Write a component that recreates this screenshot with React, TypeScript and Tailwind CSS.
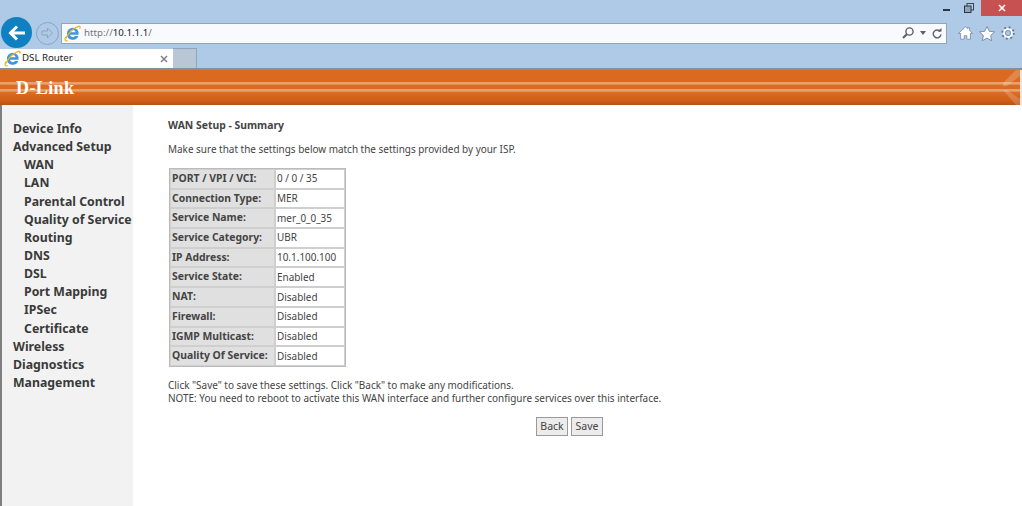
const summary = [
  ["PORT / VPI / VCI:", "0 / 0 / 35"],
  ["Connection Type:", "MER"],
  ["Service Name:", "mer_0_0_35"],
  ["Service Category:", "UBR"],
  ["IP Address:", "10.1.100.100"],
  ["Service State:", "Enabled"],
  ["NAT:", "Disabled"],
  ["Firewall:", "Disabled"],
  ["IGMP Multicast:", "Disabled"],
  ["Quality Of Service:", "Disabled"],
];

const menu = [
  { label: "Device Info", sub: false },
  { label: "Advanced Setup", sub: false },
  { label: "WAN", sub: true },
  { label: "LAN", sub: true },
  { label: "Parental Control", sub: true },
  { label: "Quality of Service", sub: true },
  { label: "Routing", sub: true },
  { label: "DNS", sub: true },
  { label: "DSL", sub: true },
  { label: "Port Mapping", sub: true },
  { label: "IPSec", sub: true },
  { label: "Certificate", sub: true },
  { label: "Wireless", sub: false },
  { label: "Diagnostics", sub: false },
  { label: "Management", sub: false },
];

const IeLogo = ({ size }: { size: number }) => (
  <svg width={size} height={size} viewBox="0 0 16 16" className="shrink-0">
    <path
      fillRule="evenodd"
      fill="#3f97dc"
      d="M8.300 2.500A5.600 5.600 0 0 0 2.700 8.200a5.600 5.600 0 0 0 10.800 2.200h-3a2.800 2.800 0 0 1-4.900-1.200h8.100a5.600 5.600 0 0 0-5.400-6.700zM5.700 6.900a2.700 2.700 0 0 1 5.300 0z"
    />
    <path d="M1.500 13C4 8 9 3 13.500 1.300c1.600-.5 2 .5 1.300 2.200" fill="none" stroke="#f0b429" strokeWidth="1.200" />
    <path d="M1.600 11C.5 14 1 15.500 3.500 14.600" fill="none" stroke="#f0b429" strokeWidth="1.200" />
  </svg>
);

const Chrome = () => (
  <div className="flex h-[68px] flex-col bg-[#afcae7]">
    <div className="flex h-4 items-start justify-end">
      <div className="mt-[9px] h-[2px] w-[7px] bg-[#2c3540]" />
      <svg width="10" height="10" viewBox="0 0 10 10" className="mt-[3px] ml-[14px]">
        <rect x="3" y="0.500" width="6.500" height="6.500" fill="none" stroke="#3a4450" />
        <rect x="0.500" y="3" width="6.500" height="6.500" fill="#8fa3b8" stroke="#2c3540" />
      </svg>
      <div className="ml-[7px] flex h-4 w-[41px] items-center justify-center bg-[#c75050]">
        <svg width="8" height="8" viewBox="0 0 8 8">
          <path d="M1 1l6 6M7 1l-6 6" stroke="#fff" strokeWidth="1.500" />
        </svg>
      </div>
    </div>
    <div className="flex h-[32px] items-center">
      <div className="mt-px ml-px flex h-[31px] w-[31px] shrink-0 items-center justify-center rounded-full bg-[#0f80c2]">
        <svg width="18" height="16" viewBox="0 0 18 16">
          <path d="M9 1.500L2.500 8 9 14.500M3 8h14" fill="none" stroke="#fff" strokeWidth="3" />
        </svg>
      </div>
      <div className="mt-[2px] ml-[4px] flex h-[23px] w-[23px] shrink-0 items-center justify-center rounded-full border border-[#8ca3bd]">
        <svg width="13" height="12" viewBox="0 0 13 12">
          <path d="M6.500 1l5 5-5 5V8H1V4h5.500z" fill="none" stroke="#8ca3bd" />
        </svg>
      </div>
      <div className="mt-[2px] ml-[2px] flex h-[21px] w-[886px] shrink-0 items-center border border-[#8fa5bd] bg-[#f8fafd] pl-[2px] font-['Noto_Sans',sans-serif]">
        <IeLogo size={17} />
        <span className="ml-[3px] text-[9.700px] text-[#777]">
          http://<span className="text-[#222]">10.1.1.1</span>/
        </span>
        <div className="ml-auto flex items-center pr-[4px]">
          <svg width="12" height="12" viewBox="0 0 12 12">
            <circle cx="7.500" cy="4.500" r="3.600" fill="none" stroke="#5b6168" strokeWidth="1.400" />
            <path d="M4.800 7.200L1 11" stroke="#5b6168" strokeWidth="2" />
          </svg>
          <svg width="6" height="4" viewBox="0 0 6 4" className="mx-[6px]">
            <path d="M0 0h6L3 4z" fill="#5b6168" />
          </svg>
          <svg width="10" height="11" viewBox="0 0 10 11">
            <path d="M8.200 3.500A3.900 3.900 0 1 0 9 6.500" fill="none" stroke="#5b6168" strokeWidth="1.400" />
            <path d="M5.500 3.600h4V0z" fill="#5b6168" />
          </svg>
        </div>
      </div>
      <div className="mt-[2px] ml-[11px] flex items-center gap-[6px]">
        <svg width="15" height="14" viewBox="0 0 17 15">
          <path d="M8.500.5L.5 8h2.500v6.500h4v-4h3v4h4V8h2.500L13 4.500V1.500h-2v1z" fill="#fff" stroke="#59708a" strokeWidth=".7" />
        </svg>
        <svg width="16" height="15" viewBox="0 0 16 15">
          <path d="M8 .5l2.200 4.800 5.300.6-3.900 3.600 1 5.200L8 12.100l-4.600 2.600 1-5.200L.5 5.900l5.300-.6z" fill="#fff" stroke="#59708a" strokeWidth=".7" />
        </svg>
        <svg width="14" height="14" viewBox="0 0 15 15">
          <circle cx="7.500" cy="7.500" r="4.500" fill="none" stroke="#f4f7fb" strokeWidth="2.400" />
          <circle cx="7.500" cy="7.500" r="6.200" fill="none" stroke="#66788e" strokeWidth="2" strokeDasharray="2 2.870" />
          <circle cx="7.500" cy="7.500" r="2.700" fill="none" stroke="#66788e" strokeWidth=".7" />
        </svg>
      </div>
    </div>
    <div className="flex h-[20px] items-stretch font-['Noto_Sans',sans-serif]">
      <div className="mt-px flex w-[173px] items-center bg-white pl-[4px]">
        <IeLogo size={17} />
        <span className="ml-px text-[9.700px] text-[#222]">DSL Router</span>
        <svg width="8" height="8" viewBox="0 0 8 8" className="mr-[5px] ml-auto">
          <path d="M1 1l6 6M7 1l-6 6" stroke="#808080" strokeWidth="1.500" />
        </svg>
      </div>
      <div className="w-[24px] border-t border-r border-[#8fa5bd] bg-[#b9c6d6]" />
    </div>
  </div>
);

const Banner = () => (
  <div className="relative flex h-[37px] items-center border-t-2 border-[#7f919f] bg-[linear-gradient(to_bottom,#d96a20_0%,#d96a20_33%,#eba473_36%,#e9a06c_40%,#d96c24_44%,#d96c24_54%,#eba473_56%,#e9a06c_60%,#da6f28_64%,#d8661d_72%,#d06018_85%,#b85312_100%)] pl-4">
    <span className="font-['Liberation_Serif',serif] text-[18px] leading-none font-bold tracking-[0.4px] text-white">D-Link</span>
    <svg width="17" height="35" viewBox="0 0 17 35" className="absolute top-0 right-[2px]">
      <path d="M0 13L13 0h4v6L4 16H0z" fill="#fff" opacity=".2" />
      <path d="M0 20h4L17 29v6h-4z" fill="#fff" opacity=".18" />
    </svg>
    <div className="absolute top-0 right-0 h-[35px] w-[2px] bg-[#f3e3d6]" />
  </div>
);

const App = () => (
  <div className="h-[506px] w-[1022px] overflow-hidden bg-white font-['Noto_Sans',sans-serif]">
    <Chrome />
    <Banner />
    <div className="flex h-[401px]">
      <div className="w-[133px] shrink-0 border-l-2 border-[#7f7f7f] bg-[#f2f2f2] pt-[15px] pl-[11px] text-[12.300px] leading-[18.140px] font-bold text-[#3a3a3a]">
        {menu.map((item) => (
          <div key={item.label} className={item.sub ? "pl-[11px] whitespace-nowrap" : "whitespace-nowrap"}>
            {item.label}
          </div>
        ))}
      </div>
      <div className="grow pt-[14px] pl-[35px] text-[9.950px] text-[#444]">
        <div className="text-[10.400px] leading-[13px] font-bold">WAN Setup - Summary</div>
        <p className="mt-[11px] leading-[13px] whitespace-nowrap">
          Make sure that the settings below match the settings provided by your ISP.
        </p>
        <table className="mt-[12px] ml-px table-fixed border-separate border-spacing-0 border border-[#bbb]">
          <tbody>
            {summary.map(([label, value]) => (
              <tr key={label} className="h-[19.700px]">
                <td className="w-[105px] border border-[#cfcfcf] bg-[#e0e0e0] pl-px text-[10.400px] font-bold whitespace-nowrap">{label}</td>
                <td className="w-[70px] border border-[#cfcfcf] pl-px whitespace-nowrap">{value}</td>
              </tr>
            ))}
          </tbody>
        </table>
        <p className="mt-[12px] leading-[13px] whitespace-nowrap">
          Click "Save" to save these settings. Click "Back" to make any modifications.
          <br />
          NOTE: You need to reboot to activate this WAN interface and further configure services over this interface.
        </p>
        <div className="mt-[12px] flex w-[803px] justify-center gap-[3px]">
          <button className="h-[19px] w-[32px] border border-[#9a9a9a] bg-[#ececec] text-[10.500px] text-[#444]">Back</button>
          <button className="h-[19px] w-[32px] border border-[#9a9a9a] bg-[#ececec] text-[10.500px] text-[#444]">Save</button>
        </div>
      </div>
    </div>
  </div>
);

export default App;
